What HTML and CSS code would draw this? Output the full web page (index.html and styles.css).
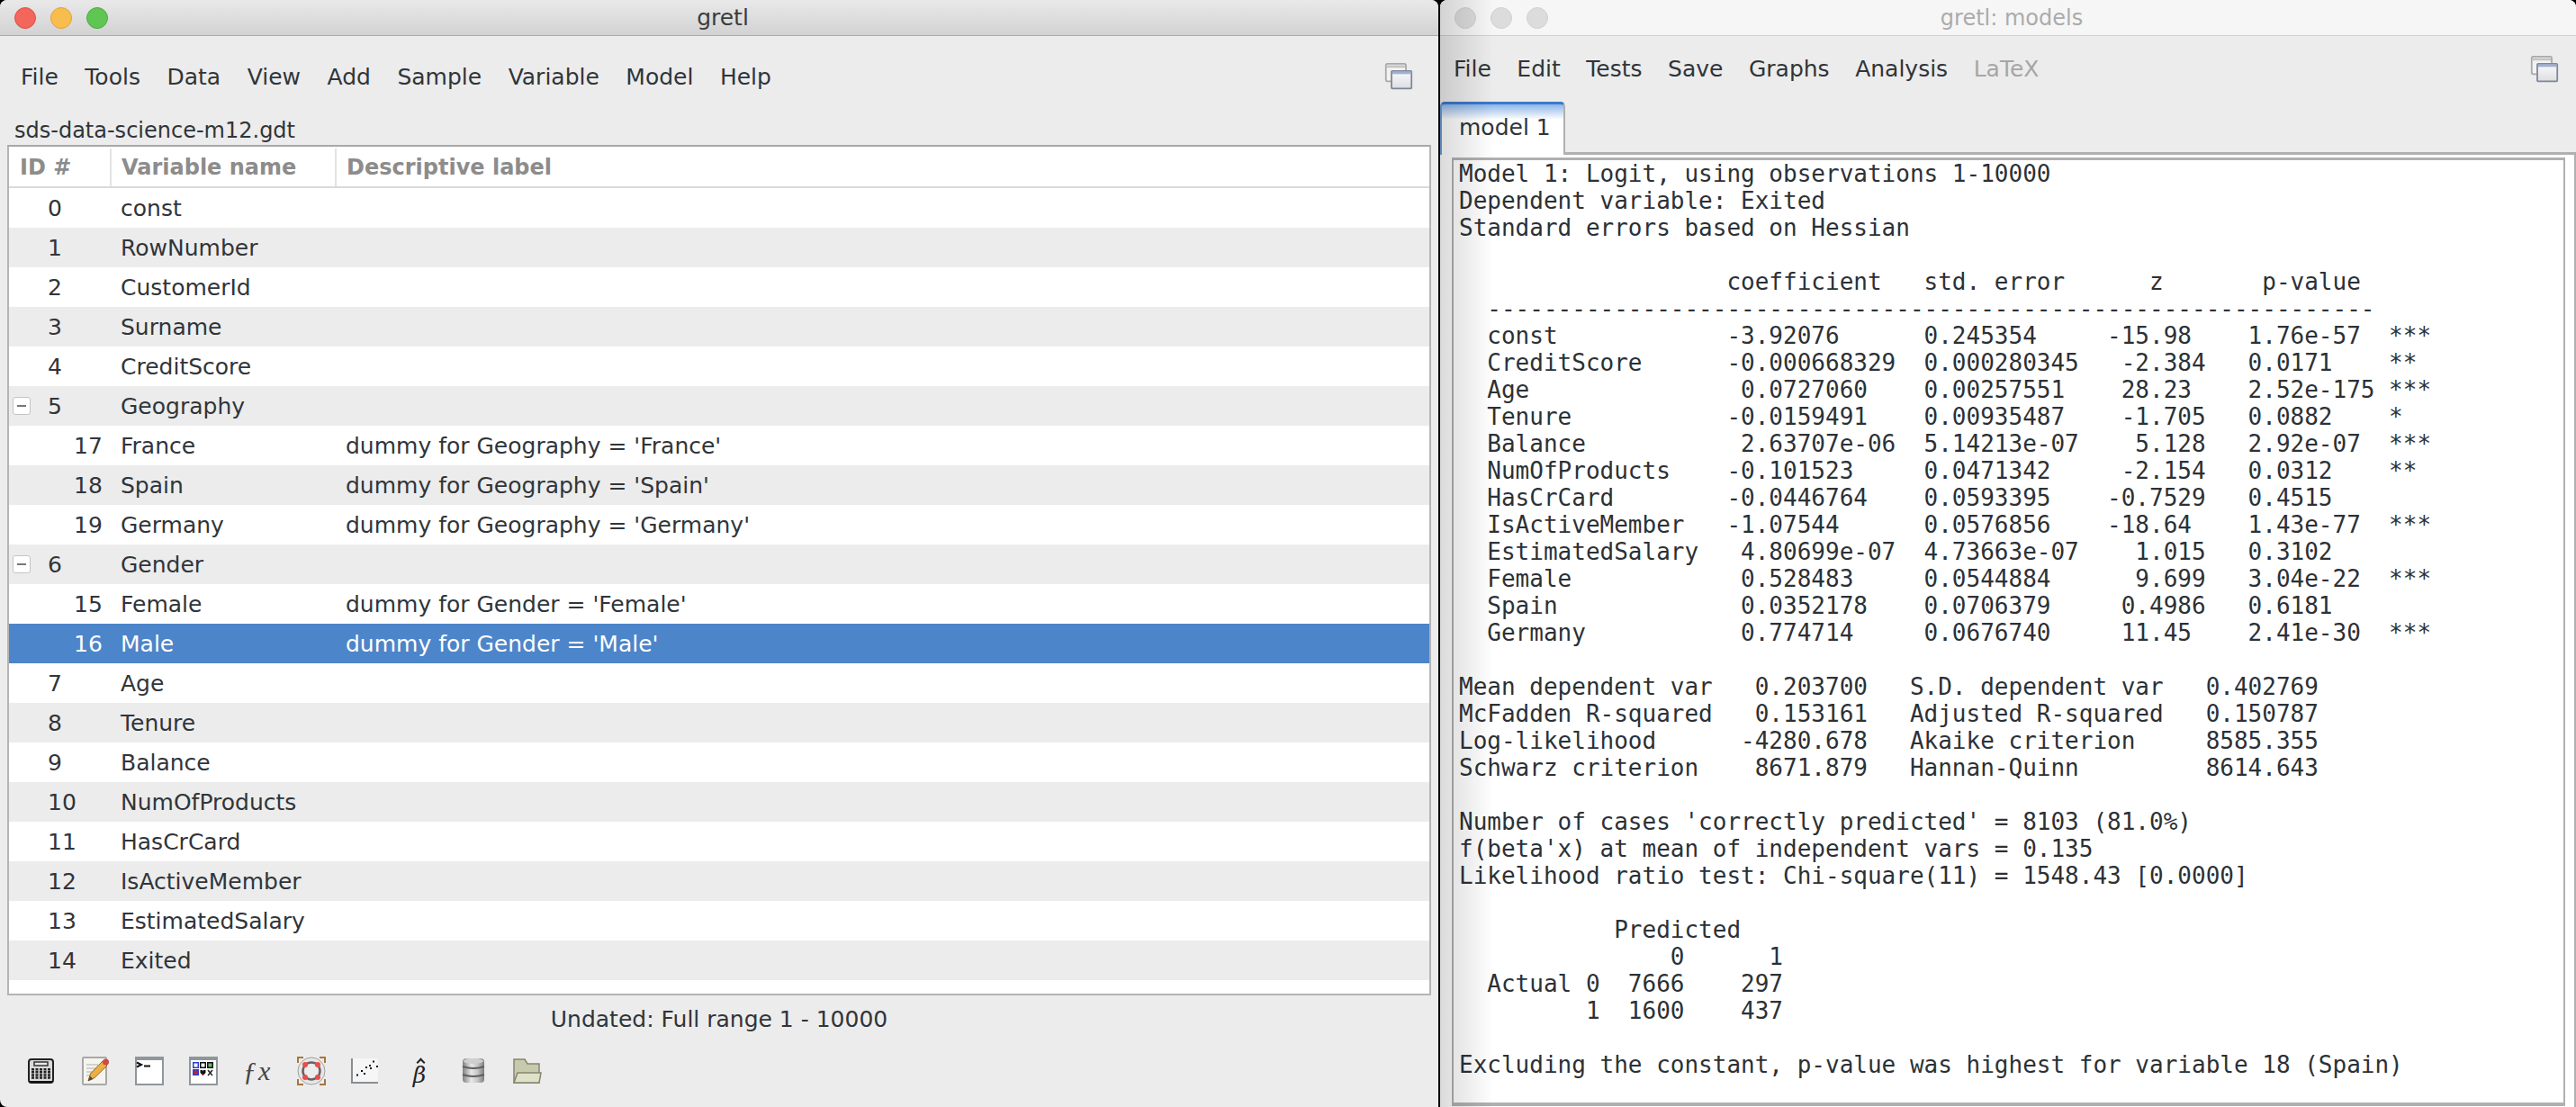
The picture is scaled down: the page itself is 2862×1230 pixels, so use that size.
FILE: index.html
```html
<!DOCTYPE html>
<html lang="en">
<head>
    <meta charset="UTF-8">
    <title>gretl</title>
    <link rel="stylesheet" href="styles.css">
</head>
<body>
<div class="desktop">
    <div class="window main">
        <div class="titlebar">
            <div class="lights">
                <span class="light red"></span>
                <span class="light yellow"></span>
                <span class="light green"></span>
            </div>
            <div class="title">gretl</div>
        </div>
        <div class="menubar">
            <span>File</span><span>Tools</span><span>Data</span><span>View</span><span>Add</span><span>Sample</span><span>Variable</span><span>Model</span><span>Help</span>
            <svg class="winicon" viewBox="0 0 36 36"><use href="#stack"/></svg>
        </div>
        <div class="filename">sds-data-science-m12.gdt</div>
        <div class="varlist">
            <div class="row head"><div class="c-id">ID #</div><div class="c-name">Variable name</div><div class="c-label">Descriptive label</div></div>
            <div class="row"><div class="c-id"><span class="top">0</span></div><div class="c-name">const</div></div>
            <div class="row"><div class="c-id"><span class="top">1</span></div><div class="c-name">RowNumber</div></div>
            <div class="row"><div class="c-id"><span class="top">2</span></div><div class="c-name">CustomerId</div></div>
            <div class="row"><div class="c-id"><span class="top">3</span></div><div class="c-name">Surname</div></div>
            <div class="row"><div class="c-id"><span class="top">4</span></div><div class="c-name">CreditScore</div></div>
            <div class="row"><div class="c-id"><span class="toggle"></span><span class="top">5</span></div><div class="c-name">Geography</div></div>
            <div class="row"><div class="c-id"><span class="sub">17</span></div><div class="c-name">France</div><div class="c-label">dummy for Geography = 'France'</div></div>
            <div class="row"><div class="c-id"><span class="sub">18</span></div><div class="c-name">Spain</div><div class="c-label">dummy for Geography = 'Spain'</div></div>
            <div class="row"><div class="c-id"><span class="sub">19</span></div><div class="c-name">Germany</div><div class="c-label">dummy for Geography = 'Germany'</div></div>
            <div class="row"><div class="c-id"><span class="toggle"></span><span class="top">6</span></div><div class="c-name">Gender</div></div>
            <div class="row"><div class="c-id"><span class="sub">15</span></div><div class="c-name">Female</div><div class="c-label">dummy for Gender = 'Female'</div></div>
            <div class="row selected"><div class="c-id"><span class="sub">16</span></div><div class="c-name">Male</div><div class="c-label">dummy for Gender = 'Male'</div></div>
            <div class="row"><div class="c-id"><span class="top">7</span></div><div class="c-name">Age</div></div>
            <div class="row"><div class="c-id"><span class="top">8</span></div><div class="c-name">Tenure</div></div>
            <div class="row"><div class="c-id"><span class="top">9</span></div><div class="c-name">Balance</div></div>
            <div class="row"><div class="c-id"><span class="top">10</span></div><div class="c-name">NumOfProducts</div></div>
            <div class="row"><div class="c-id"><span class="top">11</span></div><div class="c-name">HasCrCard</div></div>
            <div class="row"><div class="c-id"><span class="top">12</span></div><div class="c-name">IsActiveMember</div></div>
            <div class="row"><div class="c-id"><span class="top">13</span></div><div class="c-name">EstimatedSalary</div></div>
            <div class="row"><div class="c-id"><span class="top">14</span></div><div class="c-name">Exited</div></div>
        </div>
        <div class="status">Undated: Full range 1 - 10000</div>
        <div class="toolbar">
            <!-- calculator -->
            <svg viewBox="0 0 32 32"><rect x="2" y="3" width="27" height="26" rx="3" fill="#dadada" stroke="#222" stroke-width="2"/><path d="M3 28h25" stroke="#111" stroke-width="2"/><rect x="8" y="6" width="15" height="4" fill="#e8e8e8" stroke="#333" stroke-width="1.5"/><path d="M6.5 13v12M11 13v12M15.500 13v12M20 13v12M24.500 13v12" stroke="#222" stroke-width="3" stroke-dasharray="2.500 .6"/></svg>
            <!-- pencil on a page -->
            <svg viewBox="0 0 32 32"><rect x="2" y="1" width="26" height="30" rx="1" fill="#f5f4ee" stroke="#a8a8a8" stroke-width="2"/><path d="M6 9h13M6 13h10M6 17h8M6 21h6" stroke="#c6c6c0" stroke-width="1.500"/><path d="M8 27l2.500-8L24 5l5 5-14 13.500z" fill="#eeb040" stroke="#8a6a32"/><path d="M8 27l2-5.500 3.500 3.500z" fill="#55483a"/><circle cx="27.500" cy="6" r="3.500" fill="#cf4a44"/></svg>
            <!-- console -->
            <svg viewBox="0 0 32 32"><rect x="1" y="1" width="30" height="30" fill="#fff" stroke="#8f969c" stroke-width="2"/><rect x="1" y="1" width="30" height="3" fill="#8f969c"/><path d="M2 6.500l5 2.500-5 2.500" fill="none" stroke="#111" stroke-width="2"/><path d="M10 10.500h7" stroke="#111" stroke-width="2"/></svg>
            <!-- icon view -->
            <svg viewBox="0 0 32 32"><rect x="1" y="1" width="30" height="30" fill="#fff" stroke="#8f969c" stroke-width="2"/><rect x="1" y="1" width="30" height="3" fill="#8f969c"/><rect x="4.750" y="6.750" width="5.500" height="5.500" fill="#fff" stroke="#2a3fd0" stroke-width="1.500"/><rect x="12.750" y="6.750" width="5.500" height="5.500" fill="#fff" stroke="#111" stroke-width="1.500"/><rect x="20.750" y="6.750" width="5.500" height="5.500" fill="#6ab86a" stroke="#111" stroke-width="1.500"/><rect x="4.750" y="14.750" width="5.500" height="5.500" fill="#c02030" stroke="#2a3fd0" stroke-width="1.500"/><path d="M12.500 15h2.500l.5 1.500.5-1.500h2.500v3l-3 3-3-3z" fill="#111"/><path d="M14 19.500h3l-1.500 1.800z" fill="#c02030"/><path d="M21 15l5 6m0-6l-5 6" stroke="#222" stroke-width="1.500"/></svg>
            <div class="fx">ƒx</div>
            <!-- lifebuoy -->
            <svg viewBox="0 0 32 32"><path d="M1 7V1h6M25 1h6v6M31 25v6h-6M7 31H1v-6" fill="none" stroke="#a8763a" stroke-width="2"/><circle cx="16" cy="16" r="15" fill="#e6e6e6" stroke="#a0a0a0"/><circle cx="16" cy="16" r="9.500" fill="none" stroke="#6a6060" stroke-width="2.500"/><circle cx="16" cy="16" r="7" fill="#ececec"/><circle cx="9" cy="9" r="3" fill="#ec4c4c"/><circle cx="23" cy="9" r="3" fill="#ec4c4c"/><circle cx="9" cy="23" r="3" fill="#ec4c4c"/><circle cx="23" cy="23" r="3" fill="#ec4c4c"/></svg>
            <!-- scatter plot -->
            <svg viewBox="0 0 32 32"><rect x="1" y="2" width="29" height="27" fill="#f6f6f6"/><path d="M1 2v27h29" fill="none" stroke="#8a8e92" stroke-width="2"/><path d="M6 20.500h2M11 16h2M14 19h2M16 12h2M20 10h2M21 13h2M24 5.500h2M28 11h2" stroke="#111" stroke-width="2"/></svg>
            <div class="beta">β</div>
            <!-- database -->
            <svg viewBox="0 0 32 32"><defs><linearGradient id="can" x1="0" x2="1" y1="0" y2="0"><stop offset="0" stop-color="#808080"/><stop offset=".4" stop-color="#e8e8e8"/><stop offset=".7" stop-color="#c4c4c4"/><stop offset="1" stop-color="#7c7c7c"/></linearGradient></defs><rect x="4" y="2" width="24" height="27" rx="4" fill="url(#can)"/><ellipse cx="16" cy="5" rx="11" ry="3" fill="#cfcfcf"/><path d="M4 11q12 4 24 0M4 20q12 4 24 0" fill="none" stroke="#5e5e5e" stroke-width="2"/></svg>
            <!-- folder -->
            <svg viewBox="0 0 32 32"><path d="M1 3h12l3 5h13v21H1z" fill="#c8caad" stroke="#85866f" stroke-width="1.500"/><path d="M1 29l4-11h26l-2 11z" fill="#dfe1c8" stroke="#85866f" stroke-width="1.500"/></svg>
        </div>
    </div>

    <div class="window models">
        <div class="titlebar inactive">
            <div class="lights">
                <span class="light off"></span>
                <span class="light off"></span>
                <span class="light off"></span>
            </div>
            <div class="title">gretl: models</div>
        </div>
        <div class="menubar">
            <span>File</span><span>Edit</span><span>Tests</span><span>Save</span><span>Graphs</span><span>Analysis</span><span class="disabled">LaTeX</span>
            <svg class="winicon" viewBox="0 0 36 36"><use href="#stack"/></svg>
        </div>
        <div class="tabs"><div class="tab">model 1</div></div>
        <div class="pane">
<pre class="output">Model 1: Logit, using observations 1-10000
Dependent variable: Exited
Standard errors based on Hessian

                   coefficient   std. error      z       p-value
  ---------------------------------------------------------------
  const            -3.92076      0.245354     -15.98    1.76e-57  ***
  CreditScore      -0.000668329  0.000280345   -2.384   0.0171    **
  Age               0.0727060    0.00257551    28.23    2.52e-175 ***
  Tenure           -0.0159491    0.00935487    -1.705   0.0882    *
  Balance           2.63707e-06  5.14213e-07    5.128   2.92e-07  ***
  NumOfProducts    -0.101523     0.0471342     -2.154   0.0312    **
  HasCrCard        -0.0446764    0.0593395    -0.7529   0.4515
  IsActiveMember   -1.07544      0.0576856    -18.64    1.43e-77  ***
  EstimatedSalary   4.80699e-07  4.73663e-07    1.015   0.3102
  Female            0.528483     0.0544884      9.699   3.04e-22  ***
  Spain             0.0352178    0.0706379     0.4986   0.6181
  Germany           0.774714     0.0676740     11.45    2.41e-30  ***

Mean dependent var   0.203700   S.D. dependent var   0.402769
McFadden R-squared   0.153161   Adjusted R-squared   0.150787
Log-likelihood      -4280.678   Akaike criterion     8585.355
Schwarz criterion    8671.879   Hannan-Quinn         8614.643

Number of cases 'correctly predicted' = 8103 (81.0%)
f(beta'x) at mean of independent vars = 0.135
Likelihood ratio test: Chi-square(11) = 1548.43 [0.0000]

           Predicted
               0      1
  Actual 0  7666    297
         1  1600    437

Excluding the constant, p-value was highest for variable 18 (Spain)</pre>
        </div>
    </div>
</div>

<svg class="defs" width="0" height="0">
    <defs>
        <linearGradient id="pane" x1="0" y1="0" x2="0" y2="1"><stop offset="0" stop-color="#fafafa"/><stop offset="1" stop-color="#dcdee2"/></linearGradient>
        <g id="stack">
            <rect x="2" y="2" width="25" height="22" rx="2" fill="#f2f2f2" stroke="#a8a8a8" stroke-width="2"/>
            <rect x="3" y="4" width="23" height="3" fill="#c4c4c4"/>
            <rect x="9" y="11" width="25" height="22" rx="1" fill="url(#pane)" stroke="#80869a" stroke-width="2"/>
            <rect x="10" y="12" width="23" height="3" fill="#9fb0d4"/>
        </g>
    </defs>
</svg>
</body>
</html>
```

FILE: styles.css
```css
html, body {
    margin: 0;
    padding: 0;
    height: 100%;
    overflow: hidden;
    background: #000;
}
body {
    font-family: "DejaVu Sans", sans-serif;
    font-size: 25px;
    color: #30353a;
}
.desktop {
    display: flex;
    height: 1230px;
    gap: 2px;
}
.window {
    background: #ececec;
    display: flex;
    flex-direction: column;
    position: relative;
    overflow: hidden;
}
.main {
    width: 1598px;
    border-radius: 8px 8px 0 8px;
}
.models {
    width: 1262px;
    border-radius: 8px 8px 0 0;
}
/* shadow of the front window falling on the back one */
.models::after {
    content: "";
    position: absolute;
    left: 0;
    top: 0;
    bottom: 0;
    width: 60px;
    background: linear-gradient(to right, rgba(0,0,0,0.14), rgba(0,0,0,0));
    pointer-events: none;
}
.titlebar {
    height: 39px;
    border-bottom: 1px solid #a9a9a9;
    background: linear-gradient(#e9e9e9, #d2d2d2);
    display: flex;
    align-items: center;
    position: relative;
}
.titlebar.inactive {
    background: #f6f6f6;
    border-bottom-color: #d0d0d0;
}
.lights {
    display: flex;
    gap: 16px;
    padding-left: 16px;
}
.light {
    width: 24px;
    height: 24px;
    border-radius: 50%;
    box-sizing: border-box;
}
.light.red { background: #f2665c; border: 1px solid #dc5148; }
.light.yellow { background: #f9bd4d; border: 1px solid #dfa23a; }
.light.green { background: #5fc653; border: 1px solid #4cab41; }
.light.off { background: #dcdcdc; border: 1px solid #d0d0d0; }
.title {
    flex: 1;
    text-align: center;
    font-size: 25px;
    color: #3c3c3c;
    margin-left: -112px;
}
.inactive .title {
    color: #ababab;
    font-size: 24px;
}
.menubar {
    display: flex;
    align-items: center;
    gap: 29.5px;
    padding: 0 28px 0 23px;
    height: 90px;
    box-sizing: border-box;
    position: relative;
}
.models .menubar {
    height: 73px;
    padding-left: 15px;
    padding-right: 19px;
    gap: 28.5px;
}
.disabled {
    color: #a6a6a6;
}
.winicon {
    width: 32px;
    height: 32px;
    margin-left: auto;
}
.filename {
    padding-left: 16px;
    height: 31px;
    line-height: 31px;
    font-size: 24px;
}
.varlist {
    margin-left: 8px;
    margin-right: 8px;
    background: #fff;
    border: 2px solid #b4b4b4;
    border-top-color: #a8a8a8;
    height: 945px;
    box-sizing: border-box;
}
.row {
    display: flex;
    align-items: center;
    height: 44px;
    white-space: nowrap;
}
.row:nth-child(odd) {
    background: #ececec;
}
.row.head {
    height: 46px;
    background: #fff;
    color: #8c8c8c;
    font-weight: bold;
    font-size: 24px;
    padding-top: 2px;
    border-bottom: 2px solid #dadada;
    box-sizing: border-box;
}
.row.selected {
    background: #4d85ca;
    color: #fff;
}
.c-id {
    width: 114px;
    box-sizing: border-box;
    padding-left: 12px;
    display: flex;
    align-items: center;
    position: relative;
}
.c-name {
    width: 250px;
    box-sizing: border-box;
    padding-left: 10px;
}
.c-label {
    padding-left: 10px;
}
.head .c-id {
    height: 42px;
    border-right: 2px solid #e4e4e4;
    width: 114px;
}
.head .c-name {
    height: 42px;
    line-height: 42px;
    padding-left: 11px;
    border-right: 2px solid #e4e4e4;
}
.head .c-label {
    padding-left: 11px;
}
.top {
    position: absolute;
    left: 43px;
}
.sub {
    position: absolute;
    left: 72px;
}
.toggle {
    width: 20px;
    height: 20px;
    box-sizing: border-box;
    border: 1px solid #c4c4c4;
    border-radius: 3px;
    background: #fff;
    position: relative;
    margin-left: -8px;
}
.toggle::after {
    content: "";
    position: absolute;
    left: 4px;
    right: 4px;
    top: 8px;
    height: 2px;
    background: #777;
}
.status {
    text-align: center;
    height: 54px;
    line-height: 54px;
}
.toolbar {
    display: flex;
    align-items: center;
    gap: 28px;
    padding-left: 30px;
    height: 60px;
}
.toolbar svg {
    width: 32px;
    height: 32px;
    flex: none;
}
.fx, .beta {
    width: 32px;
    height: 32px;
    line-height: 32px;
    text-align: center;
    font-family: "Liberation Serif", serif;
    font-style: italic;
    font-size: 30px;
    color: #444;
}
.fx {
    letter-spacing: 2px;
}
.beta {
    font-family: "DejaVu Serif", serif;
    font-size: 25px;
    color: #222;
    position: relative;
    padding-top: 5px;
    box-sizing: border-box;
}
/* the hat over the beta */
.beta::before {
    content: "";
    position: absolute;
    left: 14px;
    top: 3px;
    width: 5px;
    height: 5px;
    border-top: 2px solid #222;
    border-left: 2px solid #222;
    transform: rotate(45deg);
}
.tabs {
    height: 56px;
    position: relative;
    border-bottom: 3px solid #b0b0b0;
}
.tab {
    width: 139px;
    height: 59px;
    box-sizing: border-box;
    padding: 11px 0 0 19px;
    background: linear-gradient(#8db6e8, #fff 30%);
    border-top: 3px solid #3c78cc;
    border-left: 2px solid #6f9fdc;
    border-right: 2px solid #b0b0b0;
    border-radius: 5px 5px 0 0;
    position: relative;
}
.pane {
    flex: 1;
    background: #fff;
    border-right: 2px solid #b0b0b0;
    padding: 3px 10px 1px 13px;
    display: flex;
    min-height: 0;
}
.output {
    flex: 1;
    margin: 0;
    border: 2px solid #b0b0b0;
    border-top-width: 3px;
    border-bottom-width: 4px;
    background: #fff;
    font-family: "DejaVu Sans Mono", monospace;
    font-size: 26px;
    line-height: 30px;
    padding: 0 6px;
    overflow: hidden;
    color: #2c3136;
}
.defs {
    position: absolute;
}
```
